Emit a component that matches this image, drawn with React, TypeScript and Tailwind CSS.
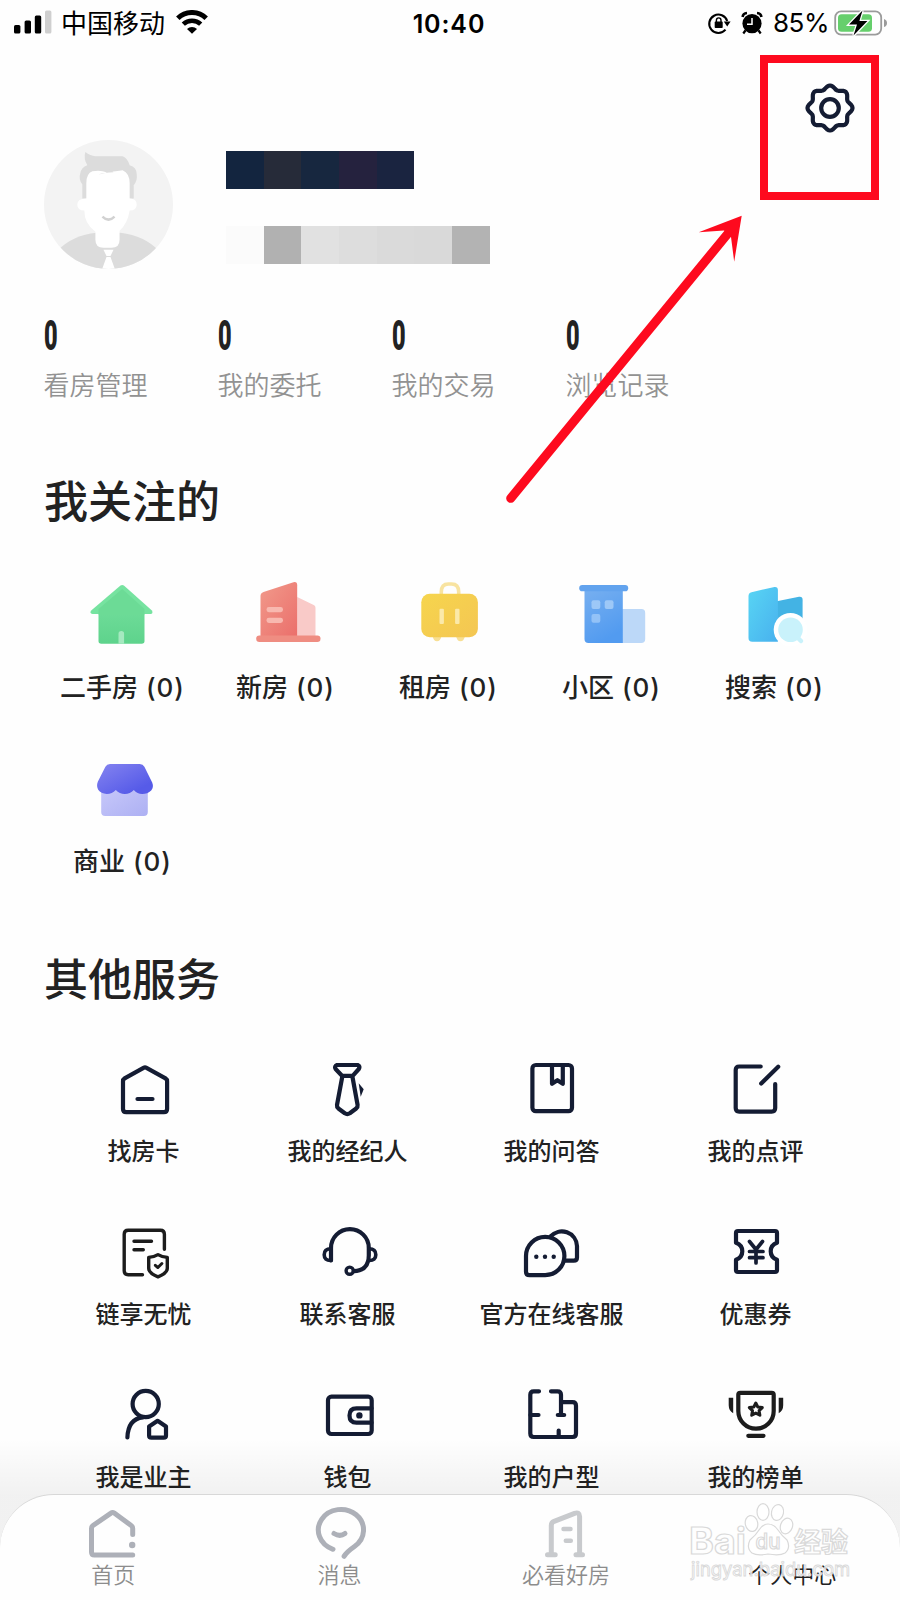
import type { ReactNode } from "react";

const SANS = "font-['Inter','Noto_Sans_CJK_SC',sans-serif]";
const CJK = "font-['Noto_Sans_CJK_SC',sans-serif]";

type Item = { label: string; icon: ReactNode };

const gearPath =
  Array.from({ length: 97 }, (_, i) => {
    const a = (i / 96) * Math.PI * 2;
    const r = 20.7 + 1.8 * Math.cos(8 * a);
    return `${i ? "L" : "M"}${(25 + r * Math.cos(a)).toFixed(2)} ${(25 + r * Math.sin(a)).toFixed(2)}`;
  }).join("") + "Z";

function StatusBar() {
  return (
    <header className="grid h-11 grid-cols-3 items-center pl-3.5 pr-3">
      <div className="flex items-center">
        <svg className="h-6 w-[38px]" viewBox="0 0 38 24">
          <rect x="0" y="15" width="6.4" height="8.5" rx="1.6" />
          <rect x="10.6" y="10.5" width="6.4" height="13" rx="1.6" />
          <rect x="20.8" y="5.5" width="6.4" height="18" rx="1.6" />
          <rect x="31" y="0.5" width="6.4" height="23" rx="1.6" fill="#cfcfcf" />
        </svg>
        <span className={`ml-[9px] text-[26px] leading-[44px] text-black ${CJK}`}>中国移动</span>
        <svg className="ml-[11px] h-6 w-8" viewBox="0 0 32 24">
          <path d="M1.8 8.2a20.5 20.5 0 0 1 28.4 0" fill="none" stroke="#000" strokeWidth="5" />
          <path d="M7.3 14.2a12.6 12.6 0 0 1 17.4 0" fill="none" stroke="#000" strokeWidth="4.6" />
          <path d="M16 23.8l-5-4.8a7.2 7.2 0 0 1 10 0z" />
        </svg>
      </div>
      <time className={`-ml-1 pt-[3px] text-center text-[25px] font-semibold leading-8 tracking-[0.9px] text-black ${SANS}`}>10:40</time>
      <div className="flex items-center justify-end pt-px">
        <svg className="h-6 w-6" viewBox="0 0 24 24">
          <path d="M18.5 18.7A9.2 9.2 0 1 1 20.2 10" fill="none" stroke="#000" strokeWidth="2.1" />
          <path d="M16.8 10.4h6.8l-3.4 5z" />
          <rect x="7.7" y="10.6" width="8" height="6.4" rx="0.8" />
          <path d="M9.4 11V9.2a2.3 2.3 0 0 1 4.6 0V11" fill="none" stroke="#000" strokeWidth="1.4" />
        </svg>
        <svg className="ml-2.5 h-6 w-[22px]" viewBox="0 0 22 24">
          <circle cx="11" cy="12.6" r="9.6" />
          <path d="M1.6 6Q2 2.400 6 2M20.400 6Q20 2.400 16 2" fill="none" stroke="#000" strokeWidth="2.600" />
          <path d="M4.4 19.5L2.3 22.5M17.6 19.5l2.1 3" stroke="#000" strokeWidth="2.2" />
          <path d="M11 7v6.2H6" fill="none" stroke="#fff" strokeWidth="1.5" />
        </svg>
        <span className={`ml-2.5 w-[56px] whitespace-nowrap text-[26px] leading-none tracking-[-0.5px] text-black ${SANS}`}>85%</span>
        <svg className="ml-[5px] h-[26px] w-[54px]" viewBox="0 0 54 26">
          <rect x="1.2" y="1.4" width="46" height="23.2" rx="6" fill="#fff" stroke="#9b9b9b" strokeWidth="1.8" />
          <rect x="4" y="4.2" width="34" height="17.6" rx="3.6" fill="#66cf6c" />
          <path d="M50 9v8q3-1 3-4t-3-4z" fill="#9b9b9b" />
          <path d="M28.5 0.5L15 14.6h8l-3.5 11L33.4 11h-8z" stroke="#fff" strokeWidth="2.6" />
          <path d="M28.5 0.5L15 14.6h8l-3.5 11L33.4 11h-8z" />
        </svg>
      </div>
    </header>
  );
}

function Avatar() {
  return (
    <svg className="h-[129px] w-[129px] shrink-0" viewBox="45 140 128 128">
      <defs>
        <clipPath id="face">
          <circle cx="109" cy="204" r="64" />
        </clipPath>
      </defs>
      <g clipPath="url(#face)">
        <rect x="45" y="140" width="128" height="128" fill="#f3f3f3" />
        <path d="M58 250Q74 234 97 232h24q24 3 38 18l-8 22H66z" fill="#dcdcdc" />
        <path d="M83 198v-14q-4-5-2-11 1-6 7-8-4-6-2-13 5 4 10 4h27q5 2 7 9 7 2 7 9 1 6-3 11v13z" fill="#dcdcdc" />
        <path d="M87 198v-15q0-10 6-12 8-1.500 14 1 10-1 16-2 7 3 7 13v15q7 0 7 6t-7 6q-2 13-10 20v9q0 8-8 8h-8q-8 0-8-8v-8q-11-8-11-21-7 0-7-6 0-6 9-6z" fill="#fff" />
        <path d="M99 174q7 0 12-5l3 3q-8 0-15 2z" fill="#dcdcdc" />
        <path d="M103 216q6 6 12 0" fill="none" stroke="#d2d2d2" strokeWidth="2.4" />
        <path d="M104 249h10l-3 6h-4zM107 256h4l5 14h-14z" fill="#fff" />
      </g>
    </svg>
  );
}

function Mosaic({ cells }: { cells: string[] }) {
  return (
    <div className="flex h-[38px]">
      {cells.map((c, i) => (
        <span key={i} className={`w-[37.7px] ${c}`} />
      ))}
    </div>
  );
}

const nameCells = ["bg-[#13253f]", "bg-[#262b39]", "bg-[#17273f]", "bg-[#25223e]", "bg-[#1a2440]"];
const phoneCells = ["bg-[#fbfbfb]", "bg-[#b1b1b1]", "bg-[#e1e1e1]", "bg-[#dddddd]", "bg-[#dadada]", "bg-[#d9d9d9]", "bg-[#b3b3b3]"];
const stats = ["看房管理", "我的委托", "我的交易", "浏览记录"];

function Art({ box, children }: { box: string; children: ReactNode }) {
  return (
    <svg className="h-20 w-20" viewBox={box}>
      {children}
    </svg>
  );
}

const follows: Item[] = [
  {
    label: "二手房",
    icon: (
      <Art box="82.5 573 80 80">
        <defs>
          <linearGradient id="gr" x1="0" y1="0" x2="0" y2="1">
            <stop stopColor="#70dd9a" />
            <stop offset="1" stopColor="#5ed38c" />
          </linearGradient>
        </defs>
        <path d="M99 606h46v35q0 2.8-2.8 2.8h-40.4q-2.8 0-2.8-2.8z" fill="url(#gr)" />
        <path d="M121 585.5q1.7-1.2 3.4 0l28 25q1.6 3-1.4 3.6H93q-3.6-.8-1-3.8z" fill="#76e3a0" />
        <path d="M122.7 589l22.3 20v5.500H99V609z" fill="#6cdb96" />
        <path d="M119 643.8v-10q0-2.8 2.8-2.8t2.8 2.8v10z" fill="#a5e9c0" />
      </Art>
    ),
  },
  {
    label: "新房",
    icon: (
      <Art box="245.5 573 80 80">
        <defs>
          <linearGradient id="rd" x1="0" y1="0" x2="1" y2="1">
            <stop stopColor="#f19a8b" />
            <stop offset="1" stopColor="#eb6f6b" />
          </linearGradient>
        </defs>
        <path d="M297.7 597l16.5 8q1.8.8 1.8 2.8V636h-18.3z" fill="#f9cac8" />
        <path d="M261 636v-40q0-3 3-4l30-9.8q3.7-.8 3.7 3V636z" fill="url(#rd)" />
        <rect x="256.7" y="635.4" width="64.3" height="6.6" rx="3.2" fill="#ef8d82" />
        <rect x="267" y="607" width="16.5" height="5.2" rx="2.4" fill="#f8b8af" />
        <rect x="267" y="617.7" width="16.5" height="5.2" rx="2.4" fill="#f8b8af" />
      </Art>
    ),
  },
  {
    label: "租房",
    icon: (
      <Art box="408.5 573 80 80">
        <defs>
          <linearGradient id="yl" x1="0" y1="0" x2="1" y2="1">
            <stop stopColor="#f6d54d" />
            <stop offset="1" stopColor="#f4c653" />
          </linearGradient>
        </defs>
        <path d="M441.8 594v-2q0-8 7-8h3.4q7 0 7 8v2" fill="none" stroke="#f8e3a0" strokeWidth="3.6" />
        <path d="M433 636h9q-1 5.3-4.5 5.3T433 636zM456.5 636h9q-1 5.3-4.5 5.3t-4.500-5.300z" fill="#f8df93" />
        <rect x="421.8" y="593.8" width="56.6" height="43.4" rx="8.5" fill="url(#yl)" />
        <rect x="440" y="608.7" width="4.4" height="15.4" rx="1" fill="#fbe9a9" />
        <rect x="455.6" y="608.7" width="4.4" height="15.4" rx="1" fill="#fbe9a9" />
      </Art>
    ),
  },
  {
    label: "小区",
    icon: (
      <Art box="571.5 573 80 80">
        <defs>
          <linearGradient id="bl" x1="0" y1="0" x2="0.4" y2="1">
            <stop stopColor="#78b0f0" />
            <stop offset="1" stopColor="#529bf0" />
          </linearGradient>
        </defs>
        <path d="M622 609h20q3.700 0 3.700 3.700V639q0 4-4 4H622z" fill="#bcd8f8" />
        <path d="M585 588h38.300v55H589q-4 0-4-4z" fill="url(#bl)" />
        <rect x="579.7" y="585" width="49" height="6.300" rx="3.100" fill="#62a3ee" />
        <rect x="592" y="600.3" width="8.800" height="8.800" rx="2" fill="#9dc8f7" />
        <rect x="605.2" y="600.3" width="8.800" height="8.800" rx="2" fill="#9dc8f7" />
        <rect x="592" y="614" width="8.800" height="8.800" rx="2" fill="#93c2f7" />
      </Art>
    ),
  },
  {
    label: "搜索",
    icon: (
      <Art box="734.5 573 80 80">
        <defs>
          <linearGradient id="cy" x1="0" y1="0" x2="1" y2="1">
            <stop stopColor="#58d5f4" />
            <stop offset="1" stopColor="#48b1ee" />
          </linearGradient>
          <clipPath id="lens">
            <rect x="740" y="575" width="63.5" height="70" />
          </clipPath>
        </defs>
        <path d="M776 601.400l23.500-4.600q3.600-.5 3.600 3V640H776z" fill="#43b3e4" />
        <path d="M749 638v-42q0-3 3-3.800l23-5.200q3.400-.3 3.400 3V641.800h-25.600q-3.800 0-3.800-3.800z" fill="url(#cy)" />
        <circle cx="791" cy="629.700" r="16.800" fill="#fff" />
        <circle cx="791" cy="629.700" r="12.300" fill="#c9f2fb" clipPath="url(#lens)" />
        <path d="M799 638.500l2.500 2.500" stroke="#c9f2fb" strokeWidth="4.500" strokeLinecap="round" />
      </Art>
    ),
  },
  {
    label: "商业",
    icon: (
      <Art box="82.5 747 80 80">
        <defs>
          <linearGradient id="pu" x1="0" y1="0" x2="1" y2="1">
            <stop stopColor="#8584f0" />
            <stop offset="0.8" stopColor="#565be8" />
          </linearGradient>
          <linearGradient id="pl" x1="0" y1="0" x2="1" y2="1">
            <stop stopColor="#c8c9fa" />
            <stop offset="1" stopColor="#adb0f3" />
          </linearGradient>
        </defs>
        <path d="M101.700 786h46.600v26q0 4-4 4h-38.600q-4 0-4-4z" fill="url(#pl)" />
        <path d="M110.500 764h29.800q3.200 0 4.600 2.800l7.800 15.600q1.800 4.600-1 8-3.600 3.600-9 3.600-5 0-8.400-4-3.700 4-9 4t-9-4q-3.700 4-9 4-5.800-.2-8.600-4.200-2-3.800-.4-8l7.600-15q1.400-2.800 4.600-2.800z" fill="url(#pu)" />
      </Art>
    ),
  },
];

function Line({ box, dark, children }: { box: string; dark?: boolean; children: ReactNode }) {
  return (
    <svg
      className={`h-[72px] w-[72px] ${dark ? "text-[#1c1c1c]" : "text-[#141c33]"}`}
      viewBox={box}
      fill="none"
      stroke="currentColor"
      strokeWidth="4.2"
      strokeLinecap="round"
      strokeLinejoin="round"
    >
      {children}
    </svg>
  );
}

const services: Item[] = [
  {
    label: "找房卡",
    icon: (
      <Line box="108 1054 72 72">
        <path d="M143.500 1067.800q1.500-.8 3 0l19 10.600q1.600 1 1.600 3v27.600q0 3.200-3.200 3.200h-37.700q-3.200 0-3.200-3.200v-27.600q0-2 1.600-3z" />
        <path d="M137.500 1099h15" />
      </Line>
    ),
  },
  {
    label: "我的经纪人",
    icon: (
      <Line box="312 1054 72 72">
        <path d="M337 1065h20.600q3 1.200 1.200 4l-6.100 6.800h-10.700l-6.400-6.800q-1.600-2.800 1.400-4zM342.400 1076l-5.400 29q-.3 2 1.400 3.500l6.400 4.800q2.500 1.500 5 0l6.400-4.800q1.700-1.500 1.400-3.500l-5.300-29" />
        <path d="M358.700 1083.300l5 6-3 7.400z" fill="currentColor" stroke="none" />
      </Line>
    ),
  },
  {
    label: "我的问答",
    icon: (
      <Line box="516 1054 72 72">
        <rect x="532.400" y="1065" width="39.600" height="46.200" rx="3.500" />
        <path d="M552 1065v18.800l5.400-3.600 5.400 3.600V1065" />
      </Line>
    ),
  },
  {
    label: "我的点评",
    icon: (
      <Line box="720 1054 72 72">
        <path d="M760.700 1066.500h-21.500q-3.500 0-3.500 3.500v38q0 3.600 3.500 3.600h32.400q3.600 0 3.600-3.600v-24" />
        <path d="M761.200 1083.500l17-16.800" />
      </Line>
    ),
  },
  {
    label: "链享无忧",
    icon: (
      <Line box="108 1217 72 72" dark>
        <g strokeWidth="3.4">
          <path d="M142.500 1274.800h-14.300q-4 0-4-4v-36.500q0-4 4-4h32.200q4 0 4 4v15" />
          <path d="M134 1241.300h17.500M134 1249.800h9.300" />
          <path d="M158 1254.600q4 2.400 9.300 2.800v10.800q0 5-9.300 8.600-9.300-3.600-9.300-8.600v-10.800q5.300-.4 9.300-2.800z" />
          <path d="M155.300 1265.300l2.600 2.200 4-4" strokeWidth="3" />
        </g>
      </Line>
    ),
  },
  {
    label: "联系客服",
    icon: (
      <Line box="312 1217 72 72">
        <path d="M331 1260.500V1248a18.900 18.900 0 0 1 37.800 0v7.500q0 15-15 15.700" />
        <path d="M331 1248.700q-6.800 0-6.800 6t6.800 5.800M369 1248.700q6.800 0 6.800 6t-6.800 5.800" strokeWidth="3.600" />
        <circle cx="349.700" cy="1270.700" r="3.600" strokeWidth="3.400" />
      </Line>
    ),
  },
  {
    label: "官方在线客服",
    icon: (
      <Line box="516 1217 72 72">
        <path d="M526 1256a19.200 19.200 0 1 1 19.200 19.200h-15.700q-3.500 0-3.500-3.500z" />
        <path d="M550.500 1236.500a15.200 15.200 0 0 1 26.500 9.500v11.500q0 3.200-3.200 3.200H565" />
        <g fill="currentColor" stroke="none">
          <circle cx="536.300" cy="1256.700" r="2.200" />
          <circle cx="545" cy="1256.700" r="2.200" />
          <circle cx="553.700" cy="1256.700" r="2.200" />
        </g>
      </Line>
    ),
  },
  {
    label: "优惠券",
    icon: (
      <Line box="720 1217 72 72">
        <path d="M738 1231h37q2 0 2 2v9.800q-6.300 2.300-6.300 8.500t6.300 8.500v10.200q0 2-2 2h-37q-2 0-2-2v-10.200q6.300-2.300 6.300-8.500t-6.300-8.500V1233q0-2 2-2z" />
        <path d="M749.500 1241.500l6.500 8 6.500-8M756 1250v13M749.500 1251.500h13.500M749.500 1257.700h13.500" strokeWidth="3.700" />
      </Line>
    ),
  },
  {
    label: "我是业主",
    icon: (
      <Line box="108 1380 72 72">
        <circle cx="145.700" cy="1404" r="13.100" />
        <path d="M127.400 1437.500q.6-18.500 15.500-20.200" />
        <path d="M157.600 1420.800l8.400 5.800v8.800q0 2.300-2.300 2.300h-12.300q-2.300 0-2.300-2.300v-8.800z" />
      </Line>
    ),
  },
  {
    label: "钱包",
    icon: (
      <Line box="312 1380 72 72">
        <rect x="328" y="1396.700" width="43.700" height="37.300" rx="3.500" />
        <path d="M371.500 1408.300h-15q-7 0-7 7.200t7 7.200h15" />
        <circle cx="359.400" cy="1415.400" r="3.200" fill="currentColor" stroke="none" />
      </Line>
    ),
  },
  {
    label: "我的户型",
    icon: (
      <Line box="516 1380 72 72">
        <path d="M539 1391.300h-5.200q-3.500 0-3.500 3.500v38.700q0 3.500 3.500 3.500h38.700q3.500 0 3.500-3.500v-27.800q0-3.500-3.500-3.500H561" />
        <path d="M551 1391.300h6.500q3.500 0 3.500 3.500v20M557.800 1415h6.400M530.500 1415h8M558.700 1430.500v6" />
      </Line>
    ),
  },
  {
    label: "我的榜单",
    icon: (
      <Line box="720 1380 72 72" dark>
        <path d="M740.300 1392.800h31.400q2 0 2 2v16.200a17.700 17.700 0 0 1-35.400 0v-16.200q0-2 2-2zM748.300 1435.800h15.200" />
        <path d="M755.800 1403l2 4 4.500.6-3.200 3.100.8 4.500-4.100-2.100-4.100 2.100.8-4.500-3.200-3.100 4.500-.6z" strokeWidth="3" />
        <path d="M728.700 1397.800h4.500v15.500q-4.500-2.500-4.500-8zM783.200 1397.800h-4.500v15.500q4.500-2.500 4.500-8z" fill="currentColor" stroke="none" />
      </Line>
    ),
  },
];

function TabIcon({ box, color, children }: { box: string; color: string; children: ReactNode }) {
  return (
    <svg className={`h-14 w-16 ${color}`} viewBox={box} fill="none" stroke="currentColor" strokeWidth="5" strokeLinecap="round" strokeLinejoin="round">
      {children}
    </svg>
  );
}

const tabs: (Item & { active?: boolean })[] = [
  {
    label: "首页",
    icon: (
      <TabIcon box="80.500 1507 64 56" color="text-[#adb0b8]">
        <path d="M132.200 1535.500v-6q0-2-1.500-3l-17-12.400q-1.600-1.200-3.200 0l-18 12.400q-1.500 1-1.500 3v23.600q0 3 3 3h38.200" />
        <circle cx="131.700" cy="1546" r="3.200" fill="currentColor" stroke="none" />
      </TabIcon>
    ),
  },
  {
    label: "消息",
    icon: (
      <TabIcon box="307.500 1507 64 56" color="text-[#adb0b8]">
        <path d="M332.500 1550.300A22.600 20.600 0 1 1 354 1547.500Q346 1553 343.600 1557.300" />
        <path d="M333.500 1534.500q6 3.800 11 0" />
      </TabIcon>
    ),
  },
  {
    label: "必看好房",
    icon: (
      <TabIcon box="534 1507 64 56" color="text-[#c8cacd]">
        <path d="M551.300 1555v-28.500q0-3 2.800-4.200l20.500-8q5-1.600 5 3.200v37.500M547.500 1555.800h7.700M576 1555.800h6.500" />
        <path d="M563.500 1530h7M565.800 1541.700h5" strokeWidth="4.500" />
      </TabIcon>
    ),
  },
  { label: "个人中心", icon: <div className="h-14" />, active: true },
];

function Watermark() {
  return (
    <svg
      className={`pointer-events-none absolute bottom-0 right-10 h-[106px] w-[180px] ${SANS}`}
      viewBox="680 1494 180 106"
      fill="#fff"
      fillOpacity="0.75"
      stroke="#d9d9d9"
      strokeWidth="1.2"
    >
      <text x="689" y="1554" fontSize="37" fontWeight="700" textLength="57" lengthAdjust="spacingAndGlyphs">Bai</text>
      <ellipse cx="763" cy="1512" rx="6" ry="8.300" />
      <ellipse cx="777.500" cy="1512.500" rx="6" ry="8" transform="rotate(12 777.5 1512.5)" />
      <ellipse cx="751.500" cy="1523.500" rx="6.200" ry="8" transform="rotate(-12 751.5 1523.5)" />
      <ellipse cx="786.500" cy="1526" rx="6" ry="8" transform="rotate(20 786.5 1526)" />
      <path d="M768 1524q6 0 10 6t9 10q4 8-2 13-5 3-17 1-11 2-16-1-6-5-2-13 6-5 9-10 4-6 9-6z" />
      <text x="755.500" y="1549" fontSize="22" fontWeight="500" textLength="25" lengthAdjust="spacingAndGlyphs">du</text>
      <text x="794" y="1552" fontSize="27" fontWeight="700">经验</text>
      <text x="691" y="1576" fontSize="19" strokeWidth="0.9" textLength="159" lengthAdjust="spacingAndGlyphs">jingyan.baidu.com</text>
    </svg>
  );
}

export default function App() {
  return (
    <div className={`relative flex h-[1600px] w-[900px] flex-col overflow-hidden bg-[#fefefe] text-[#222] ${SANS}`}>
      <StatusBar />

      <section className="flex h-56 items-start pl-11 pr-[45px] pt-[39px]">
        <div className="pt-[57px]">
          <Avatar />
        </div>
        <div className="ml-[53px] flex flex-col gap-[37px] pt-[68px]">
          <Mosaic cells={nameCells} />
          <Mosaic cells={phoneCells} />
        </div>
        <svg className="ml-auto h-[50px] w-[50px] text-[#141c33]" viewBox="0 0 50 50" fill="none" stroke="currentColor" strokeWidth="4.200">
          <path d={gearPath} strokeLinejoin="round" />
          <circle cx="25" cy="25" r="8.800" />
        </svg>
      </section>

      <section className="grid grid-cols-[repeat(4,174px)] pl-[43.5px] pt-[47px]">
        {stats.map((s) => (
          <div key={s} className="flex flex-col">
            <span className="h-[42px] w-6 origin-left scale-x-[0.56] font-['Roboto',sans-serif] text-[42px] font-black leading-[42px]">0</span>
            <span className={`mt-[9px] h-9 text-[26px] font-[350] leading-9 text-[#929292] ${CJK}`}>{s}</span>
          </div>
        ))}
      </section>

      <h2 className={`pl-11 pt-[65px] text-[44px] font-medium leading-[64px] ${CJK}`}>我关注的</h2>

      <section className="grid grid-cols-[repeat(5,163px)] pl-10 pt-[42px]">
        {follows.map((f) => (
          <div key={f.label} className="flex h-[174px] flex-col items-center">
            {f.icon}
            <span className="mt-[15px] whitespace-nowrap pl-0.5 text-[26px] font-medium leading-10">
              {f.label}
              <span className="tracking-[1px]"> (0)</span>
            </span>
          </div>
        ))}
      </section>

      <h2 className={`pl-11 pt-[24px] text-[44px] font-medium leading-[64px] ${CJK}`}>其他服务</h2>

      <section className="grid grid-cols-[repeat(4,204px)] pl-[41.5px] pt-[45px]">
        {services.map((s) => (
          <div key={s.label} className="flex h-[163px] flex-col items-center">
            {s.icon}
            <span className={`mt-[6px] text-2xl font-medium leading-9 ${CJK}`}>{s.label}</span>
          </div>
        ))}
      </section>

      <div className="absolute bottom-0 left-0 flex h-[161px] w-full flex-col justify-end bg-gradient-to-b from-transparent via-black/[0.05] via-35% to-black/[0.05]">
        <nav className="grid h-[106px] grid-cols-[repeat(4,226.4px)] rounded-t-[54px] border-t border-[#d8d8d8] bg-[#fefefe] pt-[11px]">
          {tabs.map((t) => (
            <div key={t.label} className="flex flex-col items-center">
              {t.icon}
              <span className={`-mt-[5px] text-[22px] leading-8 ${CJK} ${t.active ? "text-[#222]" : "font-[350] text-[#8c8c8c]"}`}>{t.label}</span>
            </div>
          ))}
        </nav>
        <Watermark />
      </div>

      <div className="absolute left-[760px] top-[54.5px] h-[145px] w-[118.500px] border-[8.500px] border-[#fe0a1e]" />
      <svg className="absolute left-[500px] top-[210px] h-[300px] w-[250px]" viewBox="500 210 250 300">
        <path d="M510.700 498.300L730 231" stroke="#fe0a1e" strokeWidth="9" strokeLinecap="round" />
        <path d="M741.700 215.700L698.700 232.300 724 230.500 731 237 734.200 261.700z" fill="#fe0a1e" />
      </svg>
    </div>
  );
}
